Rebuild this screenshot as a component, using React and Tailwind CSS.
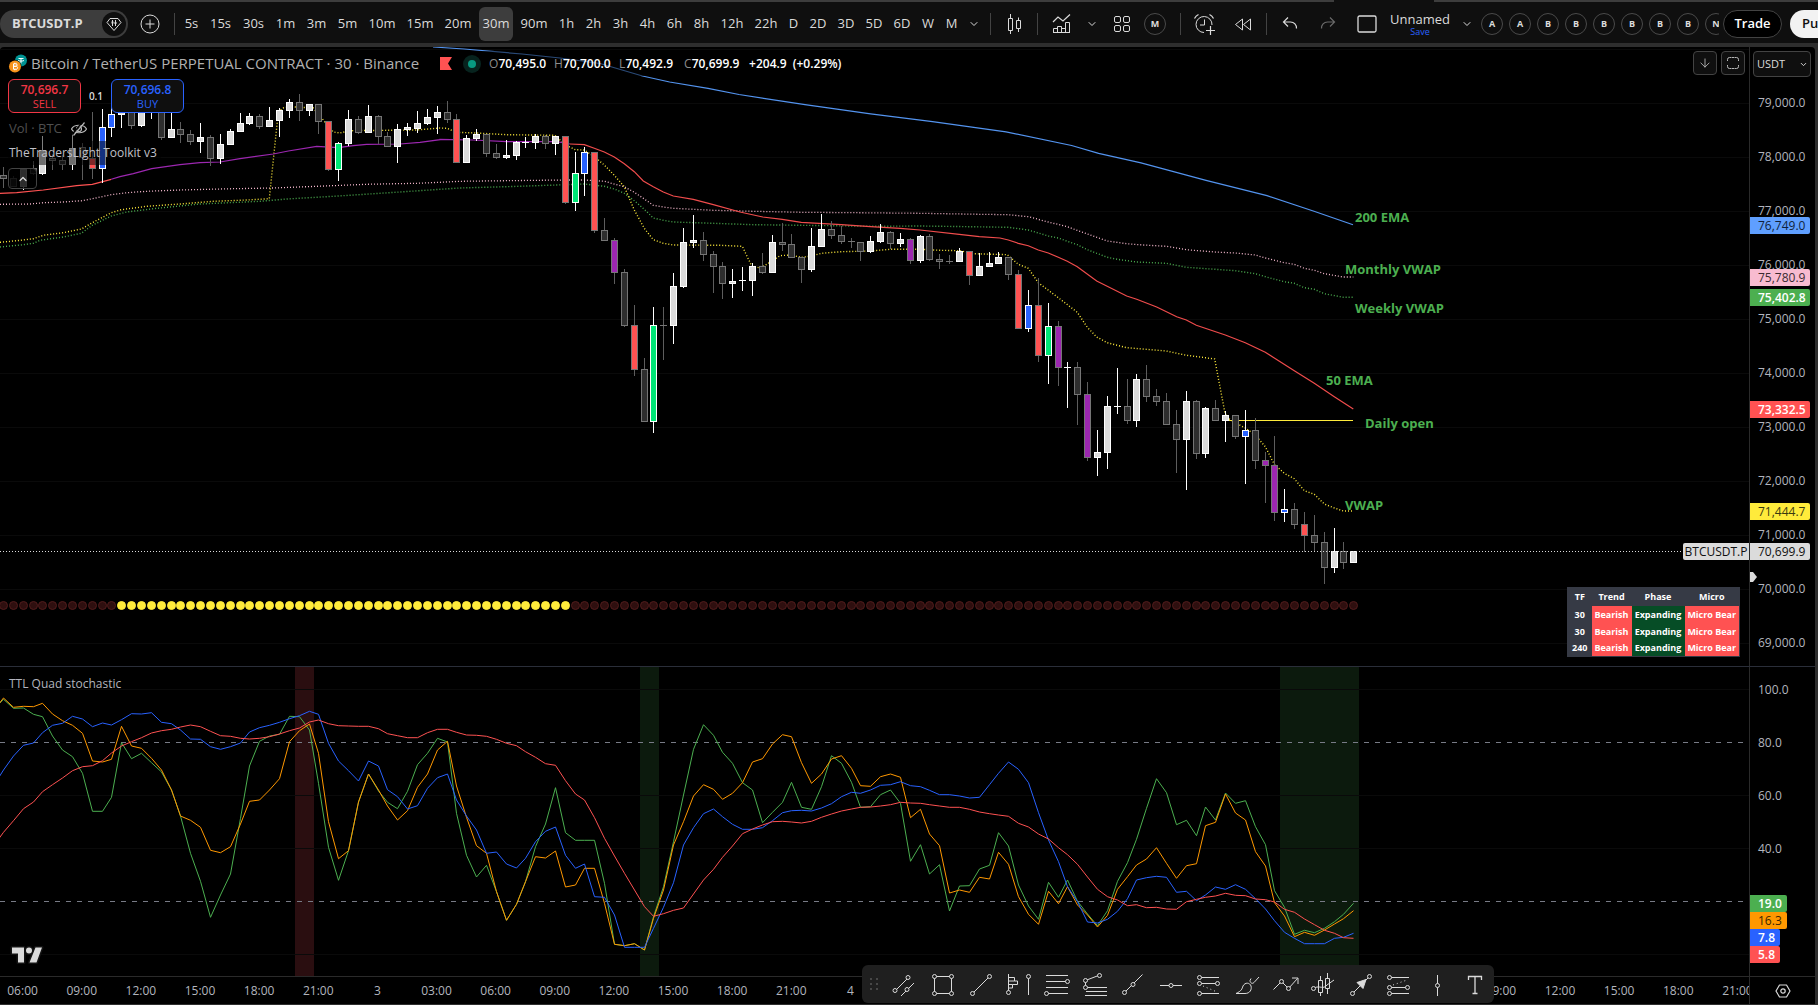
import React from "react";
import { ChevronDown, ChevronUp, ArrowDown } from "lucide-react";

/* ---------- candle data: [wick top, body top, body bottom, wick bottom, kind] ---------- */
const CANDLES = [
  [167, 175, 179, 188, "d"], [176, 178, 187, 187, "d"], [169, 169, 187, 190, "w"], [161, 168, 174, 175, "d"],
  [136, 150, 174, 175, "w"], [154, 158, 161, 170, "d"], [155, 160, 165, 170, "d"], [133, 148, 165, 170, "w"],
  [143, 147, 158, 180, "d"], [112, 158, 169, 179, "r"], [109, 127, 169, 183, "b"], [104, 114, 128, 137, "b"],
  [100, 104, 115, 128, "w"], [104, 108, 126, 129, "d"], [100, 104, 126, 127, "w"], [100, 102, 108, 119, "w"],
  [100, 105, 138, 140, "d"], [112, 129, 138, 138, "w"], [122, 129, 135, 143, "d"], [130, 134, 142, 145, "d"],
  [123, 137, 142, 153, "w"], [135, 137, 159, 166, "d"], [134, 144, 159, 164, "w"], [129, 131, 145, 145, "w"],
  [113, 123, 132, 132, "w"], [113, 116, 124, 125, "w"], [114, 116, 127, 129, "d"], [107, 120, 127, 127, "w"],
  [108, 110, 121, 137, "w"], [99, 102, 111, 118, "w"], [94, 102, 111, 121, "d"], [104, 104, 111, 116, "w"],
  [104, 104, 122, 134, "d"], [121, 121, 170, 171, "r"], [142, 143, 170, 181, "g"], [110, 119, 144, 146, "w"],
  [116, 119, 133, 134, "d"], [105, 116, 133, 133, "w"], [115, 116, 137, 144, "d"], [132, 136, 147, 147, "d"],
  [124, 129, 147, 163, "w"], [123, 127, 130, 136, "w"], [111, 123, 129, 133, "w"], [109, 117, 124, 125, "w"],
  [106, 112, 118, 134, "w"], [101, 112, 120, 123, "d"], [114, 119, 163, 163, "r"], [135, 138, 163, 163, "w"],
  [129, 134, 139, 141, "w"], [134, 134, 154, 157, "d"], [144, 153, 158, 159, "d"], [140, 155, 158, 159, "w"],
  [141, 142, 156, 160, "w"], [137, 142, 143, 148, "w"], [134, 136, 143, 149, "w"], [135, 136, 144, 149, "d"],
  [136, 136, 144, 155, "w"], [136, 136, 203, 204, "r"], [152, 173, 203, 211, "g"], [147, 152, 174, 196, "b"],
  [152, 152, 231, 233, "r"], [218, 230, 241, 241, "d"], [238, 240, 273, 284, "p"], [269, 272, 326, 327, "d"],
  [305, 325, 370, 376, "r"], [358, 369, 422, 422, "d"], [307, 325, 422, 433, "g"], [307, 325, 326, 360, "d"],
  [273, 286, 326, 344, "w"], [228, 242, 287, 288, "w"], [215, 240, 243, 248, "w"], [232, 240, 255, 261, "d"],
  [251, 254, 267, 293, "d"], [262, 266, 284, 299, "d"], [269, 281, 284, 298, "w"], [267, 280, 281, 291, "w"],
  [263, 266, 281, 296, "w"], [253, 266, 273, 274, "d"], [235, 242, 273, 273, "w"], [223, 242, 245, 251, "d"],
  [234, 244, 258, 258, "d"], [257, 257, 270, 283, "d"], [228, 246, 270, 272, "w"], [214, 229, 247, 247, "w"],
  [221, 229, 236, 239, "d"], [226, 235, 242, 244, "d"], [238, 241, 242, 248, "d"], [242, 242, 252, 261, "d"],
  [236, 241, 252, 253, "w"], [224, 232, 242, 243, "w"], [231, 232, 244, 249, "d"], [233, 239, 244, 247, "w"],
  [238, 239, 261, 264, "p"], [235, 236, 261, 263, "w"], [234, 236, 260, 261, "d"], [254, 259, 262, 269, "d"],
  [255, 261, 262, 264, "d"], [248, 251, 262, 262, "w"], [251, 251, 276, 285, "r"], [253, 266, 276, 276, "w"],
  [252, 263, 267, 267, "w"], [252, 257, 264, 264, "w"], [257, 257, 275, 280, "d"], [270, 274, 329, 329, "r"],
  [290, 305, 329, 332, "b"], [278, 305, 356, 362, "r"], [303, 326, 356, 384, "g"], [321, 326, 368, 386, "p"],
  [362, 367, 368, 408, "w"], [362, 367, 395, 425, "d"], [382, 394, 458, 461, "p"], [430, 452, 458, 476, "w"],
  [396, 406, 453, 469, "w"], [368, 406, 407, 414, "w"], [379, 406, 421, 424, "d"], [374, 379, 421, 427, "w"],
  [365, 379, 397, 402, "d"], [389, 396, 402, 406, "d"], [393, 401, 425, 425, "d"], [410, 424, 440, 473, "d"],
  [391, 401, 440, 490, "w"], [400, 401, 454, 459, "d"], [407, 408, 454, 458, "w"], [400, 408, 421, 421, "d"],
  [411, 415, 421, 442, "w"], [415, 415, 437, 439, "d"], [410, 430, 437, 484, "b"], [418, 430, 461, 469, "d"],
  [452, 460, 466, 503, "p"], [436, 465, 513, 521, "p"], [489, 509, 513, 522, "b"], [503, 509, 525, 529, "d"],
  [512, 524, 536, 552, "r"], [515, 535, 543, 551, "d"], [532, 542, 568, 584, "d"], [528, 551, 568, 573, "w"],
  [542, 551, 563, 569, "d"], [551, 551, 563, 563, "w"],
];
const KIND = {
  w: { fill: "#dbdbdb", edge: "#ffffff", wick: "#ffffff" },
  d: { fill: "#2e2e2e", edge: "#757575", wick: "#5d5d5d" },
  r: { fill: "#ff5252", edge: "#757575", wick: "#5d5d5d" },
  p: { fill: "#9c27b0", edge: "#757575", wick: "#5d5d5d" },
  g: { fill: "#00e676", edge: "#ffffff", wick: "#ffffff" },
  b: { fill: "#2962ff", edge: "#ffffff", wick: "#ffffff" },
};
const candleX = (i) => 3 + 10 * i - Math.floor((i + 3.5) / 6.943);

/* Point lists are kept in third-pixel units and joined from three stretches of the chart. */
const STRETCH = [[0, 90], [440, 100], [920, 200]];
const curve = (...parts) =>
  parts
    .flatMap(([s, pts]) => pts.map(([x, y]) => `${(STRETCH[s][0] + x / 3).toFixed(1)},${(STRETCH[s][1] + y / 3).toFixed(1)}`))
    .join(" ");

const EMA200 =
  "433,47 464,49 522,54 560,58 600,63.5 642.5,76 669.6,82 708,88.3 739,94.5 805,104.7 870.6,113.8 932.5,121.7 1006,131.8 1071.6,145.5 1098.6,153.3 1141,162.8 1206,180.3 1267,195.7 1314,211.3 1353,224.7";
const EMA50_LEFT = curve([0, [[0, 310], [50, 308], [130, 300], [230, 287], [277, 283], [334, 268]]]);
const EMA50_MID = curve(
  [0, [[334, 268], [360, 260], [400, 251], [455, 236], [540, 224], [600, 218], [660, 216], [720, 206], [820, 192], [865, 183], [950, 169], [1015, 173], [1060, 167], [1100, 163], [1200, 162], [1260, 157], [1320, 149]]],
  [1, [[0, 118], [100, 120], [200, 125], [350, 125], [390, 132]]]
);
const EMA50_RIGHT = curve(
  [1, [[390, 132], [433, 134], [463, 145], [493, 156], [523, 171], [553, 191], [583, 215], [610, 243], [640, 260], [670, 276], [700, 288], [760, 298], [820, 314], [900, 336], [968, 351], [1027, 358], [1084, 367], [1204, 374], [1291, 380], [1381, 385]]],
  [2, [[0, 90], [118, 103], [178, 110], [240, 114], [265, 120], [295, 130], [325, 137], [355, 150], [385, 159], [415, 172], [442, 184], [472, 200], [530, 243], [620, 288], [650, 298], [710, 321], [770, 350], [799, 360], [829, 376], [916, 405], [976, 428], [1036, 457], [1063, 474], [1123, 512], [1183, 550], [1243, 590], [1300, 627]]]
);
const MONTHLY = curve(
  [0, [[0, 343], [90, 342], [130, 338], [190, 336], [247, 332], [277, 326], [334, 314], [380, 308], [440, 304], [540, 300], [700, 296], [820, 294], [920, 290], [1100, 283], [1250, 280]]],
  [1, [[0, 247], [60, 244], [200, 242], [370, 240], [433, 240], [493, 244], [553, 260], [583, 277], [613, 297], [640, 316], [670, 321], [700, 325], [820, 331], [940, 334], [1084, 337], [1250, 338]]],
  [2, [[0, 40], [180, 43], [265, 44], [325, 50], [385, 66], [442, 80], [502, 102], [562, 123], [620, 131], [670, 135], [739, 139], [799, 149], [886, 156], [946, 159], [1006, 165], [1036, 174], [1093, 188], [1123, 193], [1153, 205], [1183, 211], [1213, 221], [1270, 231], [1300, 231]]]
);
const WEEKLY = curve(
  [0, [[0, 471], [70, 464], [100, 460], [120, 451], [190, 441], [244, 430], [277, 406], [334, 378], [380, 366], [460, 356], [600, 342], [780, 334], [860, 327], [1015, 318], [1200, 306]]],
  [1, [[0, 268], [60, 264], [200, 260], [376, 254], [433, 252], [493, 259], [523, 267], [553, 280], [583, 302], [613, 328], [640, 354], [670, 361], [700, 366], [820, 370], [940, 374], [1084, 376], [1300, 379]]],
  [2, [[0, 78], [150, 80], [265, 82], [325, 90], [385, 108], [415, 114], [442, 124], [472, 134], [502, 149], [562, 172], [592, 178], [650, 186], [739, 190], [799, 202], [886, 208], [946, 212], [1006, 221], [1036, 230], [1093, 245], [1123, 250], [1153, 263], [1183, 268], [1213, 281], [1270, 292], [1300, 292]]]
);
const VWAP = curve(
  [0, [[0, 457], [50, 452], [100, 446], [130, 436], [190, 428], [244, 417], [277, 398], [334, 368], [364, 359], [440, 349], [540, 342], [640, 334], [740, 330], [808, 326], [835, 66], [848, 54], [868, 50], [940, 54], [970, 90], [1000, 126], [1020, 129], [1050, 122], [1250, 120], [1320, 114]]],
  [1, [[0, 84], [22, 85], [49, 97], [109, 99], [200, 104], [345, 106], [376, 135], [406, 149], [433, 150], [463, 170], [493, 195], [523, 226], [553, 260], [583, 330], [613, 385], [640, 419], [670, 430], [700, 435], [840, 436], [907, 439], [935, 498], [960, 504], [985, 490], [1020, 467], [1050, 465], [1084, 472], [1114, 468], [1144, 460], [1204, 455], [1291, 453], [1351, 448], [1420, 448]]],
  [2, [[0, 148], [60, 151], [120, 152], [160, 161], [262, 164], [295, 193], [325, 205], [355, 248], [415, 293], [472, 337], [502, 382], [530, 411], [562, 428], [620, 443], [739, 453], [799, 466], [856, 473], [884, 477], [915, 640], [925, 655], [946, 668], [976, 684], [1006, 705], [1036, 740], [1063, 793], [1093, 820], [1123, 836], [1153, 872], [1183, 883], [1213, 912], [1243, 924], [1270, 933], [1300, 933]]]
);

/* ---------- oscillator: one value per candle, third-pixel units below 570 then below 660 ---------- */
const osc = (start, first, second) =>
  [`-7,${570 + start / 3}`]
    .concat(first.map((v, i) => `${candleX(i) + 0.5},${(570 + v / 3).toFixed(1)}`))
    .concat(second.map((v, i) => `${candleX(i + first.length) + 0.5},${(660 + v / 3).toFixed(1)}`))
    .join(" ");
const OSC_GREEN = osc(420,
  [388, 415, 414, 433, 440, 498, 540, 560, 610, 724, 724, 682, 518, 566, 550, 578, 606, 660, 738, 850, 934, 1042, 975, 912, 745, 588, 514, 498, 493, 439, 440, 480, 640, 832, 931, 842, 696, 612, 663, 697, 716, 664, 584, 550, 505, 516, 730, 856, 921, 886, 965, 1051, 1003, 935, 830, 762, 653, 788, 811, 811, 811],
  [670, 853, 857, 851, 870, 770, 680, 545, 405, 268, 194, 226, 277, 310, 368, 390, 488, 457, 427, 367, 442, 448, 380, 287, 310, 367, 442, 440, 404, 390, 430, 604, 554, 642, 614, 753, 678, 677, 627, 616, 518, 558, 675, 738, 778, 667, 712, 660, 724, 762, 797, 752, 664, 608, 538, 445, 356, 398, 494, 481, 527, 441, 480, 399, 430, 422, 500, 554, 692, 742, 823, 811, 818, 805, 785, 763, 730]);
const OSC_ORANGE = osc(424,
  [384, 412, 409, 410, 400, 432, 452, 466, 490, 573, 576, 568, 469, 528, 535, 565, 600, 660, 738, 751, 772, 841, 848, 830, 762, 694, 690, 660, 626, 515, 482, 462, 550, 755, 866, 842, 696, 612, 660, 708, 750, 722, 652, 612, 540, 514, 648, 742, 827, 850, 965, 1051, 1003, 935, 860, 864, 843, 951, 945, 895, 895],
  [730, 853, 857, 851, 870, 775, 690, 555, 485, 408, 374, 388, 418, 400, 368, 306, 296, 252, 224, 230, 308, 370, 342, 297, 287, 325, 377, 379, 350, 342, 352, 473, 448, 522, 557, 699, 690, 697, 652, 657, 577, 613, 710, 763, 793, 694, 731, 680, 735, 765, 801, 766, 688, 650, 615, 597, 563, 610, 655, 617, 611, 497, 487, 402, 459, 480, 575, 618, 728, 768, 830, 817, 826, 810, 792, 776, 752]);
const OSC_BLUE = osc(650,
  [600, 558, 526, 519, 488, 466, 460, 439, 447, 470, 459, 465, 449, 431, 432, 428, 457, 461, 480, 507, 508, 530, 538, 530, 519, 486, 473, 466, 457, 446, 437, 424, 433, 520, 573, 602, 633, 573, 588, 659, 680, 717, 707, 655, 623, 612, 690, 738, 780, 850, 846, 882, 894, 865, 815, 784, 771, 856, 895, 882, 980],
  [712, 765, 862, 862, 862, 805, 742, 668, 555, 503, 461, 447, 470, 493, 508, 508, 503, 482, 458, 452, 451, 453, 444, 431, 410, 397, 400, 390, 376, 374, 365, 377, 380, 391, 404, 404, 408, 414, 412, 374, 340, 306, 328, 368, 458, 540, 605, 680, 725, 786, 789, 778, 754, 716, 660, 653, 649, 652, 697, 694, 722, 705, 681, 688, 674, 688, 716, 747, 782, 817, 835, 851, 851, 851, 835, 832, 820]);
const OSC_RED = osc(830,
  [787, 752, 716, 696, 665, 644, 624, 602, 590, 587, 572, 549, 528, 515, 503, 489, 482, 478, 471, 465, 470, 484, 497, 499, 505, 507, 505, 500, 492, 482, 474, 456, 450, 461, 467, 468, 469, 469, 476, 491, 497, 503, 503, 488, 478, 478, 487, 495, 496, 499, 508, 520, 527, 545, 562, 581, 586, 632, 672, 690, 743],
  [535, 588, 640, 690, 740, 769, 761, 751, 744, 702, 660, 628, 592, 558, 521, 507, 495, 485, 484, 486, 489, 484, 472, 462, 453, 447, 442, 441, 438, 434, 427, 429, 430, 434, 438, 442, 442, 448, 456, 461, 465, 469, 490, 501, 522, 537, 563, 584, 613, 651, 688, 710, 720, 737, 734, 743, 742, 747, 748, 725, 718, 712, 708, 700, 706, 707, 717, 719, 726, 748, 757, 777, 794, 811, 820, 833, 835]);

/* ---------- top toolbar ---------- */
const Divider = () => <span className="h-[22px] w-px shrink-0 bg-[#434343]" />;

const FRAMES = [
  ["5s", "w-[25px]"], ["15s", "w-[33px]"], ["30s", "w-[33px]"], ["1m", "w-[31px]"], ["3m", "w-[31px]"], ["5m", "w-[31px]"],
  ["10m", "w-[38px]"], ["15m", "w-[38px]"], ["20m", "w-[38px]"], ["30m", "w-[34px] mx-0.5"], ["90m", "w-[38px]"],
  ["1h", "w-[27px]"], ["2h", "w-[27px]"], ["3h", "w-[27px]"], ["4h", "w-[27px]"], ["6h", "w-[27px]"], ["8h", "w-[27px]"],
  ["12h", "w-[34px]"], ["22h", "w-[34px]"], ["D", "w-[21px]"], ["2D", "w-[28px]"], ["3D", "w-[28px]"], ["5D", "w-[28px]"],
  ["6D", "w-[28px]"], ["W", "w-[24px]"], ["M", "w-[23px]"],
];

function IconButton({ label, className = "", children }) {
  return (
    <button type="button" aria-label={label} className={`flex h-[34px] shrink-0 items-center justify-center text-[#dbdbdb] ${className}`}>
      {children}
    </button>
  );
}
const Line = ({ size = 28, w, children }) => (
  <svg width={w || size} height={size} viewBox={`0 0 ${w || size} ${size}`} fill="none" stroke="currentColor">
    {children}
  </svg>
);

function TopBar() {
  return (
    <header className="flex h-[41px] shrink-0 items-center overflow-hidden bg-[#0f0f0f] pt-[3px]">
      <div className="flex h-7 w-32 shrink-0 items-center justify-between rounded-full bg-[#3d3d3d] pr-0.5 pl-3">
        <button type="button" className="text-[13px] font-bold text-[#dbdbdb]">BTCUSDT.P</button>
        <button type="button" aria-label="Symbol details" className="flex size-6 items-center justify-center rounded-full bg-[#0f0f0f] text-[#dbdbdb]">
          <Line size={18}>
            <path d="M5 3.5h8l3 4L9 15.5 2 7.500z" strokeLinejoin="round" />
            <path d="M7.500 5v6M10.500 5v6" />
            <path d="M6.500 6.500h2v2h-2zM9.500 7h2v2h-2z" fill="currentColor" stroke="none" />
          </Line>
        </button>
      </div>
      <IconButton label="Compare symbols" className="ml-2 w-7">
        <Line size={20}><circle cx="10" cy="10" r="9" /><path d="M10 5.500v9M5.500 10h9" /></Line>
      </IconButton>
      <div className="mr-[4px] ml-[10px] flex"><Divider /></div>
      <nav aria-label="Timeframes" className="flex shrink-0 items-center">
        {FRAMES.map(([t, w]) => (
          <button
            key={t}
            type="button"
            aria-pressed={t === "30m"}
            className={`h-[34px] shrink-0 rounded-md text-[13px] text-[#dbdbdb] ${w} ${t === "30m" ? "bg-[#3d3d3d]" : ""}`}
          >
            {t}
          </button>
        ))}
      </nav>
      <IconButton label="More timeframes" className="w-[22px]"><ChevronDown size={12} strokeWidth={2} /></IconButton>
      <div className="mr-[9px] ml-[5px] flex"><Divider /></div>
      <IconButton label="Candles" className="w-7">
        <Line>
          <path d="M8.500 8.500h4v12h-4zM10.500 4v4M10.500 21v3M16.500 10.500h4v8h-4zM18.500 7.500v3M18.500 19v3" />
        </Line>
      </IconButton>
      <div className="mr-[7px] ml-[9px] flex"><Divider /></div>
      <IconButton label="Indicators" className="w-[34px]">
        <Line>
          <path d="M5.500 22.500v-4h4v4zM9.500 22.500v-6h4v6M13.500 18.500h4v4M17.500 22.500v-10h4v10zM5 22.500h17" />
          <path d="M5 12l5-5 5 4 7-6.500" strokeWidth="1.200" />
        </Line>
      </IconButton>
      <IconButton label="Indicator templates" className="w-[26px]"><ChevronDown size={12} strokeWidth={2} /></IconButton>
      <IconButton label="Layouts" className="w-[34px]">
        <Line>
          {[[6.5, 6.5], [15.5, 6.5], [6.5, 15.5], [15.5, 15.5]].map(([x, y]) => (
            <rect key={`${x}-${y}`} x={x} y={y} width="6" height="6" rx="1.500" />
          ))}
        </Line>
      </IconButton>
      <button type="button" className="ml-[5px] flex size-[22px] shrink-0 items-center justify-center rounded-full border border-[#4a4a4a] text-[9px] font-bold text-[#dbdbdb]">M</button>
      <div className="mr-[8px] ml-[14px] flex"><Divider /></div>
      <IconButton label="Create alert" className="w-8">
        <Line>
          <path d="M13 22.500a8 8 0 1 1 8-7.500M13.500 9.500v5.500H9" />
          <path d="M3.500 8.500a9 9 0 0 1 4-4M18.500 4.500a9 9 0 0 1 4 4M19.500 16v9M15 20.500h9" strokeWidth="1.200" />
        </Line>
      </IconButton>
      <IconButton label="Replay" className="ml-[6px] w-8">
        <Line><path d="M13.500 9v11l-7-5.500zM21.500 9v11l-7-5.500z" strokeLinejoin="round" /></Line>
      </IconButton>
      <div className="mx-[7px] flex"><Divider /></div>
      <IconButton label="Undo" className="w-8">
        <Line><path d="M12 7.500l-4.500 4.500 4.500 4.500M7.500 12h7a6 6 0 0 1 6 6.500" strokeWidth="1.200" /></Line>
      </IconButton>
      <IconButton label="Redo" className="ml-[6px] w-8 text-[#6a6a6a]!">
        <Line><path d="M16 7.500l4.500 4.500-4.500 4.500M20.500 12h-7a6 6 0 0 0-6 6.500" strokeWidth="1.200" /></Line>
      </IconButton>
      <IconButton label="Chart layout" className="ml-[7px] w-8">
        <Line><rect x="5" y="6" width="18" height="16" rx="1.500" strokeWidth="1.300" /></Line>
      </IconButton>
      <div className="ml-1 flex w-[66px] shrink-0 flex-col items-center">
        <button type="button" className="text-[13px] leading-[15px] text-[#dbdbdb]">Unnamed</button>
        <button type="button" className="text-[9px] leading-[10px] text-[#2962ff]">Save</button>
      </div>
      <IconButton label="Manage layouts" className="w-7"><ChevronDown size={12} strokeWidth={2} /></IconButton>
      <div className="flex min-w-0 flex-1 items-center gap-1.5 overflow-hidden">
        {["A", "A", "B", "B", "B", "B", "B", "B", "N"].map((c, i) => (
          <button key={i} type="button" className="flex size-[22px] shrink-0 items-center justify-center rounded-full border border-[#4a4a4a] text-[9px] font-bold text-[#dbdbdb]">
            {c}
          </button>
        ))}
      </div>
      <button type="button" className="ml-1 h-7 w-[59px] shrink-0 rounded-full border border-[#434343] bg-black text-[13px] font-semibold text-white">Trade</button>
      <div className="ml-2 w-7 shrink-0">
        <button type="button" className="h-7 w-20 rounded-full bg-[#f2f2f2] pl-3 text-left text-[13px] font-semibold text-[#0f0f0f]">Publish</button>
      </div>
    </header>
  );
}

/* ---------- price pane ---------- */
function PriceChart() {
  return (
    <svg className="absolute inset-0 size-full" role="img" aria-label="Bitcoin price candles">
      <g transform="translate(0 -47)">
        <g stroke="#0a0a0a" shapeRendering="crispEdges">
          {[49, 103, 157, 211, 265, 319, 373, 427, 481, 535, 589, 643].map((y) => (
            <line key={y} x1="0" x2="100%" y1={y + 0.5} y2={y + 0.5} />
          ))}
        </g>
        <g fill="none" strokeWidth="1.200">
          <polyline points={EMA200} stroke="#5393ee" />
          <polyline points={MONTHLY} stroke="#f8bbd0" strokeDasharray="1 2" strokeWidth="1.300" />
          <polyline points={WEEKLY} stroke="#4caf50" strokeDasharray="1 2" strokeWidth="1.400" />
          <polyline points={VWAP} stroke="#ffeb3b" strokeDasharray="1 2" strokeWidth="1.400" />
          <polyline points={EMA50_LEFT} stroke="#ff5252" />
          <polyline points={EMA50_MID} stroke="#9c27b0" />
          <polyline points={EMA50_RIGHT} stroke="#f04c4c" />
          <path d="M1228 420.500H1353" stroke="#ffeb3b" strokeWidth="1" shapeRendering="crispEdges" />
        </g>
        <g shapeRendering="crispEdges">
          {CANDLES.map(([hi, top, bottom, lo, kind], i) => {
            const x = candleX(i);
            const k = KIND[kind];
            const h = bottom - top;
            return (
              <g key={i}>
                <rect x={x} y={hi} width="1" height={lo - hi} fill={k.wick} />
                <rect x={x - 3} y={top} width="7" height={h} fill={k.edge} />
                {h > 2 && <rect x={x - 2} y={top + 1} width="5" height={h - 2} fill={k.fill} />}
              </g>
            );
          })}
        </g>
        <line x1="0" x2="100%" y1="551.500" y2="551.500" stroke="#dbdbdb" strokeDasharray="1 2" />
        {CANDLES.map((_, i) => {
          const on = i >= 12 && i <= 57;
          return <circle key={i} cx={candleX(i) + 0.5} cy="605.500" r="4" fill={on ? "#ffeb3b" : "#2e0f0f"} stroke={on ? "#ffeb3b" : "#511c1c"} />;
        })}
      </g>
    </svg>
  );
}

const NOTES = [
  ["200 EMA", "left-[1355px] top-[161px]"],
  ["Monthly VWAP", "left-[1345px] top-[213px]"],
  ["Weekly VWAP", "left-[1355px] top-[252px]"],
  ["50 EMA", "left-[1326px] top-[324px]"],
  ["Daily open", "left-[1365px] top-[367px]"],
  ["VWAP", "left-[1345px] top-[449px]"],
];

function Legend() {
  return (
    <div className="absolute top-1 left-2 flex flex-col items-start">
      <div className="flex h-[25px] items-center bg-black/50">
        <svg width="20" height="20" viewBox="0 0 20 20" className="mr-[3px]" aria-hidden="true">
          <circle cx="13" cy="6.500" r="6" fill="#009393" />
          <path d="M10.500 4.500h5M13 4.500v5M10 6.500c1 .8 5 .8 6 0" stroke="#fff" fill="none" />
          <circle cx="7" cy="12.500" r="6.500" fill="#000" />
          <circle cx="7" cy="12.500" r="6" fill="#f7931a" />
          <path d="M5.500 9.800h2.300c1.800 0 1.800 2.500 0 2.500H5.500h2.600c2 0 2 2.900 0 2.900H5.500zM6.500 8.800v1M6.500 15.200v1M8 8.800v1M8 15.200v1" stroke="#fff" fill="none" />
        </svg>
        <h1 className="text-[15px] text-[#b0b0b0]">Bitcoin / TetherUS PERPETUAL CONTRACT · 30 · Binance</h1>
        <svg width="13" height="13" viewBox="0 0 13 13" className="ml-5" aria-hidden="true"><path d="M1 0h12l-4 6.500L13 13H1z" fill="#ff5252" /></svg>
        <span className="ml-[11px] flex size-[18px] items-center justify-center rounded-full bg-[#07231e]"><span className="size-2 rounded-full bg-[#089981]" /></span>
        <p className="ml-[8px] flex gap-1.5 text-[12px] font-semibold text-white">
          {[["O", "70,495.0"], ["H", "70,700.0"], ["L", "70,492.9"], ["C", "70,699.9"]].map(([k, v]) => (
            <span key={k} className="min-w-[59px]"><span className="font-normal text-[#8c8c8c]">{k}</span>{v}</span>
          ))}
          <span>+204.9</span>
          <span>(+0.29%)</span>
        </p>
      </div>
      <div className="mt-[3px] flex h-[34px] items-center">
        <button type="button" className="flex h-full w-[73px] flex-col items-center justify-center rounded-md border border-[#f23645] bg-[#0f0f0f] text-[#f23645]">
          <span className="text-[12px] leading-[15px] font-semibold">70,696.7</span><span className="text-[11px] leading-[13px]">SELL</span>
        </button>
        <span className="w-[30px] text-center text-[10px] font-semibold text-[#dbdbdb]">0.1</span>
        <button type="button" className="flex h-full w-[73px] flex-col items-center justify-center rounded-md border border-[#2962ff] bg-[#0f0f0f] text-[#2962ff]">
          <span className="text-[12px] leading-[15px] font-semibold">70,696.8</span><span className="text-[11px] leading-[13px]">BUY</span>
        </button>
      </div>
      <div className="mt-1 flex h-6 items-center gap-2 bg-black/50 pl-px text-[13px] text-[#4f4f4f]">
        Vol · BTC
        <button type="button" aria-label="Show volume" className="text-[#b8b8b8]">
          <svg width="18" height="16" viewBox="0 0 18 16" fill="none" stroke="currentColor" strokeWidth="1.200">
            <path d="M1.500 8C4 3 14 3 16.500 8 14 13 4 13 1.500 8z" /><circle cx="9" cy="8" r="2.500" /><path d="M3.500 14.500l11-13" /><path d="M2 13.500l11-13" stroke="#000" />
          </svg>
        </button>
      </div>
      <div className="flex h-6 items-center bg-black/50 pr-1 pl-px text-[12px] text-[#c0c0c8]">TheTradersLight Toolkit v3</div>
      <button type="button" aria-label="Collapse legend" className="mt-[3px] flex h-[21px] w-[29px] items-center justify-center rounded border border-[#434343] bg-black/80 text-[#dbdbdb]">
        <ChevronUp size={12} strokeWidth={2.5} />
      </button>
    </div>
  );
}

function TrendTable() {
  const rows = ["30", "30", "240"];
  return (
    <table className="absolute right-[9px] bottom-[9px] border-collapse border border-[#363a45] bg-[#363a45] text-center text-[9px] leading-[13px] font-bold text-white">
      <thead>
        <tr className="h-[18px]"><th className="w-[24px]">TF</th><th className="w-[40px]">Trend</th><th className="w-[53px]">Phase</th><th className="w-[55px]">Micro</th></tr>
      </thead>
      <tbody>
        {rows.map((r, i) => (
          <tr key={i} className="h-[17px]">
            <td>{r}</td>
            <td className="bg-[#ff5252]">Bearish</td>
            <td className="bg-[#064d26]">Expanding</td>
            <td className="bg-[#ff5252]">Micro Bear</td>
          </tr>
        ))}
      </tbody>
    </table>
  );
}

const PRICES = ["79,000.0", "78,000.0", "77,000.0", "76,000.0", "75,000.0", "74,000.0", "73,000.0", "72,000.0", "71,000.0", "70,000.0", "69,000.0"];
const TAG = "absolute left-0 flex h-[17px] w-[60px] items-center rounded-r-[2px] pl-2";
const PRICE_TAGS = [
  ["76,749.0", "top-[170px] bg-[#5f9fff] text-[#0f1f3a]"],
  ["75,780.9", "top-[222px] bg-[#f8bbd0] text-[#3a2a30]"],
  ["75,402.8", "top-[242px] bg-[#4caf50] font-semibold text-white"],
  ["73,332.5", "top-[354px] bg-[#ff5252] font-semibold text-white"],
  ["71,444.7", "top-[456px] bg-[#ffeb3b] text-[#3a3a10]"],
  ["70,699.9", "top-[496px] bg-[#dbdbdb] text-[#0f0f0f]"],
];

function PricePane() {
  return (
    <section className="flex min-h-0 flex-[619]">
      <div className="relative min-w-0 flex-1 overflow-hidden">
        <PriceChart />
        {NOTES.map(([t, pos]) => (
          <span key={t} className={`absolute text-[13px] leading-[18px] font-bold whitespace-nowrap text-[#4caf50] ${pos}`}>{t}</span>
        ))}
        <Legend />
        <div className="absolute top-1 right-1 flex gap-1">
          <button type="button" aria-label="Scroll down" className="flex size-6 items-center justify-center rounded border border-[#434343] bg-[#0f0f0f] text-[#b8b8b8]"><ArrowDown size={14} strokeWidth={1.5} /></button>
          <button type="button" aria-label="Full size" className="flex size-6 items-center justify-center rounded border border-[#434343] bg-[#0f0f0f] text-[#b8b8b8]">
            <Line size={14}><path d="M1.500 5V3.500a2 2 0 0 1 2-2H5M9 1.500h1.500a2 2 0 0 1 2 2V5M12.500 9v1.500a2 2 0 0 1-2 2H9M5 12.500H3.500a2 2 0 0 1-2-2V9M5.500 1.500h3M5.500 12.500h3" /></Line>
          </button>
        </div>
        <TrendTable />
        <span className="absolute top-[496px] right-0 flex h-[17px] w-[66px] items-center justify-center rounded-l-[2px] bg-[#dbdbdb] text-[12px] text-[#0f0f0f]">BTCUSDT.P</span>
      </div>
      <div className="relative w-[66px] shrink-0 overflow-hidden border-l border-[#2a2a2a] text-[12px] text-[#b2b5be]">
        <div className="flex flex-col pt-[29px] pl-2">
          {PRICES.map((p) => <span key={p} className="flex h-[54px] shrink-0 items-center">{p}</span>)}
        </div>
        <select aria-label="Currency" className="absolute top-1 left-[3px] h-[26px] w-[58px] appearance-none rounded border border-[#434343] bg-[#0f0f0f] pl-[3px] text-[11px] text-[#dbdbdb]">
          <option>USDT</option>
        </select>
        <ChevronDown size={9} strokeWidth={2.5} className="pointer-events-none absolute top-[13px] left-[49px] text-[#dbdbdb]" />
        {PRICE_TAGS.map(([v, c]) => <span key={v} className={`${TAG} ${c}`}>{v}</span>)}
        <svg width="8" height="10" className="absolute top-[525px] left-0" aria-hidden="true"><path d="M0 0h3l4 5-4 5H0z" fill="#dbdbdb" /></svg>
      </div>
    </section>
  );
}

/* ---------- oscillator pane ---------- */
const OSC_TAGS = [
  ["19.0", "w-[37px] bg-[#4caf50] font-semibold text-white"],
  ["16.3", "w-[37px] bg-[#ff9800] text-[#3a2500]"],
  ["7.8", "w-[30px] bg-[#2962ff] font-semibold text-white"],
  ["5.8", "w-[30px] bg-[#ff5252] font-semibold text-white"],
];

function OscPane() {
  return (
    <section className="flex min-h-0 flex-[309]">
      <div className="relative min-w-0 flex-1 overflow-hidden">
        <svg className="absolute inset-0 size-full" role="img" aria-label="Quad stochastic">
          <g transform="translate(0 -667)">
            <rect x="295" y="667" width="19" height="100%" fill="#2a0e10" />
            <rect x="640" y="667" width="19" height="100%" fill="#0c1a0d" />
            <rect x="1280" y="667" width="79" height="100%" fill="#0c1a0d" />
            <g stroke="#0a0a0a" shapeRendering="crispEdges">
              {[689, 795, 848, 954].map((y) => <line key={y} x1="0" x2="100%" y1={y + 0.5} y2={y + 0.5} />)}
            </g>
            <g stroke="#787b86" strokeDasharray="5 6">
              <line x1="0" x2="100%" y1="742.500" y2="742.500" /><line x1="0" x2="100%" y1="901.500" y2="901.500" />
            </g>
            <g fill="none" strokeWidth="1">
              <polyline points={OSC_GREEN} stroke="#4caf50" />
              <polyline points={OSC_ORANGE} stroke="#ff9800" />
              <polyline points={OSC_BLUE} stroke="#2962ff" />
              <polyline points={OSC_RED} stroke="#ff5252" />
            </g>
          </g>
        </svg>
        <h2 className="absolute top-2 left-[9px] text-[12px] leading-[18px] text-[#b2b5be]">TTL Quad stochastic</h2>
        <svg width="34" height="22" viewBox="0 0 34 22" className="absolute bottom-[10px] left-[10px]" aria-label="TradingView">
          <g fill="#dbdbdb" stroke="#141414" strokeWidth="3" paintOrder="stroke" strokeLinejoin="round">
            <path d="M2 3.500h12v15H8v-9H2zM19.500 18.500h7l5.500-15h-6.500z" /><circle cx="19" cy="6.500" r="3" />
          </g>
        </svg>
      </div>
      <div className="relative w-[66px] shrink-0 overflow-hidden border-l border-[#2a2a2a] text-[12px] text-[#b2b5be]">
        <div className="flex flex-col gap-[35px] pt-[14px] pl-2">
          {["100.0", "80.0", "60.0", "40.0"].map((p) => <span key={p} className="flex h-[18px] items-center">{p}</span>)}
        </div>
        <div className="absolute top-[228px] left-0 flex flex-col">
          {OSC_TAGS.map(([v, c]) => <span key={v} className={`flex h-[17px] items-center rounded-r-[2px] pl-2 ${c}`}>{v}</span>)}
        </div>
      </div>
    </section>
  );
}

/* ---------- time axis ---------- */
const HOURS = ["06:00", "09:00", "12:00", "15:00", "18:00", "21:00"];
const TIMES = [...HOURS, "3", "03:00", ...HOURS, "4", "03:00", ...HOURS, "5", "03:00", ...HOURS];

function TimeAxis() {
  return (
    <footer className="flex h-[28px] shrink-0 border-t border-[#2a2a2a] text-[12px] text-[#b2b5be]">
      <div className="min-w-0 flex-1 overflow-hidden">
        <div className="-ml-[7px] grid h-full w-[1774px] grid-cols-[repeat(30,minmax(0,1fr))]">
          {TIMES.map((t, i) => <span key={i} className="flex items-center justify-center">{t}</span>)}
        </div>
      </div>
      <div className="flex w-[66px] shrink-0 items-center justify-center border-l border-[#2a2a2a]">
        <button type="button" aria-label="Axis settings" className="text-[#dbdbdb]">
          <Line size={16}><path d="M4.500 2h7L15 8l-3.500 6h-7L1 8z" strokeLinejoin="round" strokeWidth="1.200" /><circle cx="8" cy="8" r="2.200" strokeWidth="1.200" /></Line>
        </button>
      </div>
    </footer>
  );
}

/* ---------- floating drawing toolbar ---------- */
const Dot = ({ x, y }) => <circle cx={x} cy={y} r="2" fill="#1f1f1f" />;
const TOOLS = [
  ["Parallel channel", <><path d="M4.500 20.500L17 8M10 26l13-13" /><Dot x={4} y={20.5} /><Dot x={17} y={7.500} /><Dot x={16} y={19.5} /></>],
  ["Rectangle", <><path d="M5.500 6.500h17v17h-17z" /><Dot x={5.500} y={6.500} /><Dot x={22.5} y={6.500} /><Dot x={5.500} y={23.5} /><Dot x={22.5} y={23.5} /></>],
  ["Trend line", <><path d="M5.500 23.500l17-17" /><Dot x={5.500} y={23.5} /><Dot x={22.5} y={6.500} /></>],
  ["Volume profile", <><path d="M3.500 4v18M3.500 7.500h6v3.500h3v3.500h-5V18h-4M3.500 11h6M3.500 14.500h4M23.500 7v18" /><Dot x={3.500} y={22.5} /><Dot x={23.5} y={6.500} /></>],
  ["Fib retracement", <><path d="M3 5.500h22M3 11.500h22M5 23.500h20M3 17.500h22" /><Dot x={24.5} y={11.5} /><Dot x={3.500} y={23.5} /></>],
  ["Fib extension", <><path d="M4.500 10.500l13-5M4.500 11v6M4 17.500h22M5 21.500h21M4 25.500h22" /><Dot x={4.500} y={10.500} /><Dot x={18.5} y={5.500} /><Dot x={4.500} y={17.5} /></>],
  ["Info line", <><path d="M5.500 22.500L23.500 4.500" /><Dot x={5.500} y={22.5} /><Dot x={14} y={14.5} /></>],
  ["Horizontal line", <><path d="M3 15.500h22" /><Dot x={14} y={15.500} /></>],
  ["Long position", <><path d="M4 7.500h20M4 13.500h18M4 23.500h20" /><path d="M8 16l14 6" strokeDasharray="1 3" /><Dot x={4.500} y={7.500} /><Dot x={4.500} y={13.5} /><Dot x={22.5} y={13.5} /><Dot x={4.500} y={23.5} /></>],
  ["Brush", <path d="M3 23.500h9c5 0 7-4 6-7.500s-6-4-8 0c-1 3-1.500 5-7 7.500M26 7l-5 5.500c-2 2-4 0-4-2l1-2" />],
  ["Path", <><path d="M2.500 19.500l8-8 7 7 9-10M21 8h6v6" /><Dot x={10.500} y={11.5} /><Dot x={17.5} y={18.5} /></>],
  ["Bars pattern", <><path d="M9.500 10.500h4v12h-4zM11.500 6v4M11.500 23v3M16.500 8.500h4v10h-4zM18.500 3v5M18.500 19v5M5 18c6-3 9 2 13-3l7-5" /><Dot x={4.500} y={18.500} /></>],
  ["Arrow", <><path d="M5.500 23.500l17-17" /><path d="M19 9.500l-3 9-6-6z" fill="currentColor" /><Dot x={5.500} y={23.5} /><Dot x={22.5} y={6.500} /></>],
  ["Short position", <><path d="M4 7.500h20M4 17.500h18M4 23.500h20" /><path d="M8 15l14-5" strokeDasharray="1 3" /><Dot x={4.500} y={7.500} /><Dot x={4.500} y={17.5} /><Dot x={22.5} y={17.5} /><Dot x={4.500} y={23.5} /></>],
  ["Vertical line", <><path d="M14.500 5v21" /><Dot x={14.500} y={15.500} /></>],
  ["Text", <path d="M7.500 10V6.500h13V10M14 6.500v17M11.500 23.500h5" strokeWidth="1.300" />],
];

function DrawingBar() {
  return (
    <div role="toolbar" aria-label="Drawing tools" className="absolute bottom-px left-[862px] flex h-[38px] items-center rounded-md bg-[#1f1f1f] text-[#dbdbdb]">
      <svg width="24" height="14" viewBox="0 0 24 14" fill="#565656" aria-hidden="true">
        {[8, 14].map((x) => [1, 6, 11].map((y) => <rect key={`${x}-${y}`} x={x} y={y} width="2" height="2" rx="1" />))}
      </svg>
      {TOOLS.map(([label, art]) => (
        <button key={label} type="button" aria-label={label} className="flex h-full w-[38px] items-center justify-center"><Line>{art}</Line></button>
      ))}
    </div>
  );
}

export default function App() {
  return (
    <div className="flex h-screen min-h-[600px] flex-col overflow-hidden bg-[#2e2e2e] font-['Open_Sans',sans-serif]">
      <div className="flex h-0.5 shrink-0 bg-[#3d3d3d] pl-[1334px]"><span className="w-[100px] bg-[#0f0f0f]" /></div>
      <TopBar />
      <main className="relative mt-1 mr-[3px] mb-px flex min-h-0 flex-1 flex-col overflow-hidden rounded-t bg-black">
        <PricePane />
        <div className="h-px shrink-0 bg-[#2a2e39]" />
        <OscPane />
        <TimeAxis />
        <DrawingBar />
      </main>
    </div>
  );
}
